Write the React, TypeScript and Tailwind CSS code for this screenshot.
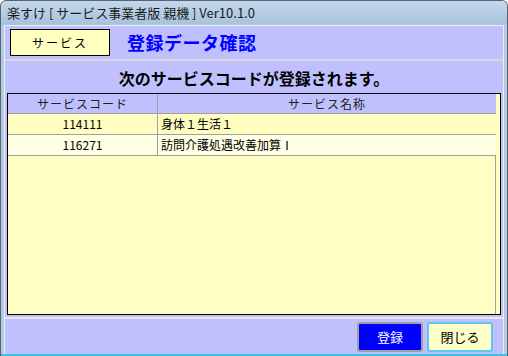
const rows = [
  { code: "114111", name: "身体１生活１", bg: "bg-[#fffcc0]" },
  { code: "116271", name: "訪問介護処遇改善加算Ⅰ", bg: "bg-[#ffffe4]" },
];

const font = "font-['MS_UI_Gothic','Noto_Sans_CJK_JP',sans-serif]";

export default function App() {
  return (
    <div
      className={`w-[508px] h-[356px] flex flex-col overflow-hidden rounded-t-[6px] border border-[#5a6470] border-b-0 bg-[#b4cce2] ${font}`}
    >
      {/* Title bar */}
      <div className="h-[24px] shrink-0 flex items-center px-[6px] text-[13px] text-[#1a1a1a] bg-gradient-to-b from-[#c4d8ec] to-[#a6c2dc]">
        楽すけ [ サービス事業者版 親機 ] Ver10.1.0
      </div>

      {/* Client area */}
      <div className="flex-1 flex flex-col mx-[3px] border-l border-t border-r border-[#f0f0f0] bg-[#c0c0ff]">
        {/* Header */}
        <div className="h-[35px] shrink-0 flex items-center gap-[17px] pl-[5px] border-b-2 border-b-[#d8d8d8]">
          <div className="w-[100px] h-[27px] flex items-center justify-center bg-[#ffffc0] border border-black text-[12px] text-black tracking-[2px]">
            サービス
          </div>
          <div className="text-[18px] font-bold text-[#0000ff] tracking-[0.5px]">登録データ確認</div>
        </div>

        {/* Main */}
        <div className="h-[258px] shrink-0 flex flex-col px-[2px] border-b-2 border-b-[#e8e8e8]">
          <div className="h-[32px] shrink-0 flex items-center justify-center text-[16px] font-bold text-black pt-[1px]">
            次のサービスコードが登録されます。
          </div>
          <div className="flex-1 mb-[2px] border border-black bg-[#ffffc4] flex flex-col">
            <div className="flex h-[20px] bg-[#c0c0ff] text-[12px] text-[#202020] border-b border-[#a0a0a0] mr-[4px]">
              <div className="w-[150px] flex items-center justify-center border-r border-[#a0a0a0] tracking-[1px]">サービスコード</div>
              <div className="flex-1 flex items-center justify-center tracking-[1px]">サービス名称</div>
            </div>
            {rows.map((r) => (
              <div
                key={r.code}
                className={`flex h-[21px] text-[12px] text-black border-b border-[#a0a0a0] mr-[4px] ${r.bg}`}
              >
                <div className="w-[150px] flex items-center justify-center border-r border-[#a0a0a0]">{r.code}</div>
                <div className="flex-1 flex items-center pl-[3px]">{r.name}</div>
              </div>
            ))}
            <div className="flex-1 mr-[4px] border-r border-[#a0a0a0]" />
          </div>
        </div>

        {/* Footer */}
        <div className="flex-1 flex items-center justify-end gap-[4px] pr-[10px] pt-[1px]">
          <button className="w-[66px] h-[30px] rounded-[3px] border-2 border-[#a0a0a0] bg-[#0000ff] text-white text-[13px]">
            登録
          </button>
          <button className="w-[66px] h-[30px] rounded-[3px] border-2 border-[#5ac8f0] bg-[#ffffc8] text-black text-[13px]">
            閉じる
          </button>
        </div>
      </div>
      <div className="h-[2px] shrink-0 bg-[#3cc4e8]" />
    </div>
  );
}
